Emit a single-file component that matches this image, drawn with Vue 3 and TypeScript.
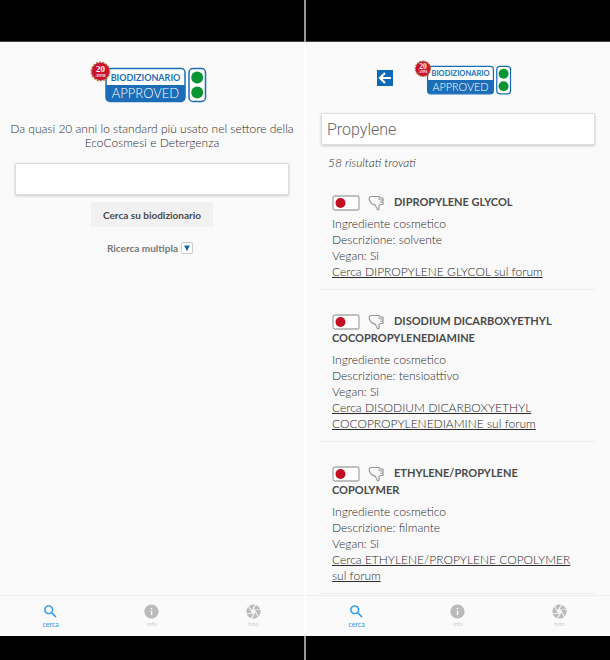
<script setup lang="ts">
import { ref } from 'vue'

interface Ingredient {
  name: string
  description: string
}

const query = ref('')
const resultQuery = ref('Propylene')

const ingredients: Ingredient[] = [
  { name: 'DIPROPYLENE GLYCOL', description: 'solvente' },
  { name: 'DISODIUM DICARBOXYETHYL COCOPROPYLENEDIAMINE', description: 'tensioattivo' },
  { name: 'ETHYLENE/PROPYLENE COPOLYMER', description: 'filmante' },
]

const screens = ['home', 'results'] as const

const tabs = [
  {
    label: 'cerca',
    active: true,
    path: 'M15.5 14h-.79l-.28-.27A6.47 6.47 0 0 0 16 9.5 6.5 6.5 0 1 0 9.5 16c1.61 0 3.09-.59 4.23-1.57l.27.28v.79l5 4.99L20.49 19l-4.99-5zm-6 0C7.01 14 5 11.99 5 9.5S7.01 5 9.5 5 14 7.01 14 9.5 11.99 14 9.5 14z',
  },
  {
    label: 'info',
    active: false,
    path: 'M12 2C6.48 2 2 6.48 2 12s4.48 10 10 10 10-4.48 10-10S17.52 2 12 2zm1 15h-2v-6h2v6zm0-8h-2V7h2v2z',
  },
  {
    label: 'foto',
    active: false,
    path: 'M9.4 10.5l4.77-8.26C13.47 2.09 12.75 2 12 2c-2.4 0-4.6.85-6.32 2.25l3.66 6.35.06-.1zM21.54 9c-.92-2.92-3.15-5.26-6-6.34L11.88 9h9.66zm.26 1h-7.49l.29.5 4.76 8.25C21 16.97 22 14.61 22 12c0-.69-.07-1.35-.2-2zM8.54 12l-3.9-6.75C3.01 7.03 2 9.39 2 12c0 .69.07 1.35.2 2h7.49l-1.15-2zm-6.08 3c.92 2.92 3.15 5.26 6 6.34L12.12 15H2.46zm11.27 0l-3.9 6.76c.7.15 1.42.24 2.17.24 2.4 0 4.6-.85 6.32-2.25l-3.66-6.35-.93 1.6z',
  },
]
</script>

<template>
  <div class="board">
    <section v-for="screen in screens" :key="screen" class="phone" :class="screen">
      <div class="bar"></div>
      <main class="content">
        <header class="brand">
          <button v-if="screen === 'results'" class="back" type="button" aria-label="Indietro">
            <svg viewBox="0 0 16 16" aria-hidden="true">
              <path d="M14 8H3M8 3L3 8l5 5" fill="none" stroke="#fff" stroke-width="2.2" />
            </svg>
          </button>
          <svg class="logo" viewBox="0 0 117 42" role="img" aria-label="Biodizionario approved">
            <rect x="16" y="7.5" width="79" height="33" rx="4" fill="#fff" />
            <path d="M16 24h79v12.5a4 4 0 0 1-4 4H20a4 4 0 0 1-4-4z" fill="#1b6db7" />
            <rect x="16" y="7.5" width="79" height="33" rx="4" fill="none" stroke="#1b6db7" stroke-width="1.5" />
            <text x="55.5" y="19.5" class="logo-bio">BIODIZIONARIO</text>
            <text x="55.5" y="37" class="logo-app">APPROVED</text>
            <rect x="99" y="7.5" width="16.5" height="33" rx="4" fill="#fff" stroke="#1b6db7" stroke-width="1.5" />
            <circle cx="107.2" cy="16.5" r="6" fill="#0b9433" />
            <circle cx="107.2" cy="31.5" r="6" fill="#0b9433" />
            <circle cx="10.5" cy="10.5" r="9" fill="#c41230" stroke="#b07a48" stroke-width="2" stroke-dasharray="2 1.14" />
            <circle cx="10.5" cy="10.5" r="8.5" fill="#cb1230" />
            <text x="10.5" y="11" class="logo-years">20</text>
            <text x="10.5" y="15.5" class="logo-anni">ANNI</text>
          </svg>
        </header>

        <form v-if="screen === 'home'" class="search" @submit.prevent>
          <p class="intro">Da quasi 20 anni lo standard più usato nel settore della EcoCosmesi e Detergenza</p>
          <input v-model="query" class="field" type="text" aria-label="Ingrediente" />
          <button class="submit" type="submit">Cerca su biodizionario</button>
          <button class="multi" type="button">
            Ricerca multipla
            <span class="drop">
              <svg viewBox="0 0 12 12" aria-hidden="true"><path d="M2.5 3h7L6 10z" fill="#1862b5" /></svg>
            </span>
          </button>
        </form>

        <template v-else>
          <input v-model="resultQuery" class="field" type="text" aria-label="Ingrediente" />
          <p class="count">58 risultati trovati</p>
          <div class="cards">
            <article v-for="item in ingredients" :key="item.name" class="card">
              <h2>
                <svg class="light" viewBox="0 0 28 16" aria-hidden="true">
                  <rect x="1" y="1" width="26" height="14" rx="2" fill="#fff" stroke="#aaa" stroke-width="1.3" />
                  <circle cx="8.5" cy="8" r="5" fill="#c40d20" />
                </svg>
                <svg class="thumb" viewBox="0 0 16 16" aria-hidden="true">
                  <path
                    d="M3 1.5H11L12.5 3H15V9.5H12.5L11 10.5V13.5Q11 15 9.8 14.8Q9 14.5 8.7 13L7 9.8L4.5 9.2Q3 9 2.8 7.3L1.5 5.5Q.8 4.5 1.4 3.6Q1.2 1.6 3 1.5Z"
                    fill="#fafafa" stroke="#999" stroke-width="1.2" stroke-linejoin="round"
                  />
                  <path d="M10 3.5L12 5H15M12 7.2H15" fill="none" stroke="#999" stroke-width="1" />
                </svg>
                <span>{{ item.name }}</span>
              </h2>
              <p>Ingrediente cosmetico</p>
              <p>Descrizione: {{ item.description }}</p>
              <p>Vegan: Si</p>
              <a href="#">Cerca {{ item.name }} sul forum</a>
            </article>
          </div>
        </template>
      </main>
      <nav class="tabs">
        <a v-for="tab in tabs" :key="tab.label" href="#" class="tab" :class="{ active: tab.active }">
          <svg viewBox="0 0 24 24" aria-hidden="true"><path :d="tab.path" fill="currentColor" /></svg>
          <span>{{ tab.label }}</span>
        </a>
      </nav>
      <div class="bar bottom"></div>
    </section>
  </div>
</template>

<style>
body {
  margin: 0;
  background: #fafafa;
}
</style>

<style scoped>
.board {
  display: grid;
  grid-template-columns: 1fr 1fr;
  column-gap: 2px;
  min-height: 100vh;
  background: linear-gradient(#999 42px, #fff 42px, #fff calc(100% - 24px), #999 calc(100% - 24px));
  font-family: Lato, "Open Sans", sans-serif;
  font-weight: 300;
  color: #2c2c2c;
}
.phone {
  display: flex;
  flex-direction: column;
  min-width: 0;
  background: #fafafa;
}
.bar {
  height: 42px;
  box-sizing: border-box;
  background: #000;
  border-bottom: 1px solid #444;
}
.bar.bottom {
  height: 24px;
  border: 0;
}
.content {
  flex: 1;
  padding: 0 15px;
}
.brand {
  display: flex;
  justify-content: center;
  align-items: center;
}
.home .brand {
  padding: 19px 8px 19px 0;
}
.results .brand {
  gap: 21px;
  padding: 18px 27px 18px 0;
}
.logo {
  display: block;
  width: 117px;
  height: 42px;
}
.results .logo {
  width: 98px;
  height: 35px;
}
.logo text {
  text-anchor: middle;
}
.logo-bio {
  font: 700 9px Lato, sans-serif;
  fill: #1b6db7;
}
.logo-app {
  font: 300 13px Lato, sans-serif;
  fill: #fff;
}
.logo-years {
  font: 700 9px "Liberation Serif", serif;
  fill: #fff;
}
.logo-anni {
  font: 700 4px "Liberation Serif", serif;
  fill: #fff;
}
.back {
  width: 16px;
  height: 16px;
  padding: 0;
  border: 0;
  background: #0a6ab8;
}
.back svg {
  display: block;
}
.search {
  display: flex;
  flex-direction: column;
  align-items: center;
}
.intro {
  margin: 0 -12px 13px;
  font-size: 12px;
  line-height: 14px;
  text-align: center;
}
.field {
  display: block;
  width: 100%;
  height: 32px;
  box-sizing: border-box;
  padding: 0 5px;
  border: 1px solid #ddd;
  border-radius: 1px;
  background: #fff;
  box-shadow: 0 1px 3px #0003;
  font: 300 16px Roboto, sans-serif;
  color: #666;
  outline: 0;
}
.submit {
  margin-top: 7px;
  padding: 0 12px;
  height: 25px;
  border: 0;
  border-radius: 1px;
  background: #f1f1f1;
  font: 700 10px Lato, sans-serif;
  color: #4a4a4a;
}
.multi {
  display: flex;
  align-items: center;
  gap: 3px;
  margin-top: 15px;
  padding: 0 4px 0 0;
  border: 0;
  background: none;
  font: 700 10px Lato, sans-serif;
  color: #777;
}
.drop {
  width: 10px;
  height: 10px;
  border: 1px solid #ccc;
  border-radius: 2px;
  background: #fff;
}
.drop svg {
  display: block;
}
.count {
  margin: 10px 7px 12px;
  font-size: 12px;
  line-height: 16px;
  font-style: italic;
}
.cards {
  display: grid;
  gap: 12px;
}
.card {
  padding: 10px 11px 9px;
  border-bottom: 1px solid #eee;
  background: #f9f9f9;
  font-size: 12px;
  line-height: 16px;
}
.card h2 {
  margin: 0 0 6px;
  font-size: 11px;
  line-height: 17px;
  color: #4a4a4a;
}
.card p {
  margin: 0;
}
.card a {
  display: block;
  color: inherit;
}
.light,
.thumb {
  height: 16px;
  margin: -2px 8px -2px 0;
  vertical-align: middle;
}
.light {
  width: 28px;
}
.thumb {
  width: 16px;
  margin-right: 10px;
}
.tabs {
  display: grid;
  grid-template-columns: repeat(3, 1fr);
  height: 40px;
  border-top: 1px solid #eee;
}
.tab {
  display: flex;
  flex-direction: column;
  align-items: center;
  padding-top: 7px;
  font-size: 6px;
  line-height: 8px;
  text-decoration: none;
  color: #aaa;
}
.tab svg {
  width: 17px;
  height: 17px;
  color: #bbb;
}
.tab.active,
.tab.active svg {
  color: #2196f3;
}
.tab.active {
  font-size: 7px;
  font-weight: 400;
}
</style>
